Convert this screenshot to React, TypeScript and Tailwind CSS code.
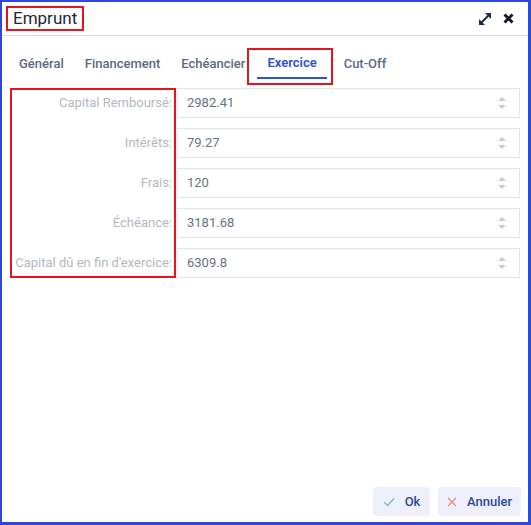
const tabs = ["Général", "Financement", "Echéancier", "Exercice", "Cut-Off"]

const rows = [
  { label: "Capital Remboursé:", value: "2982.41" },
  { label: "Intérêts:", value: "79.27" },
  { label: "Frais:", value: "120" },
  { label: "Échéance:", value: "3181.68" },
  { label: "Capital dû en fin d'exercice:", value: "6309.8" },
]

function Spinner() {
  return (
    <svg width="10" height="14" viewBox="0 0 10 14" className="mr-[12px]">
      <path d="M1 5 L5 1 L9 5 Z" fill="#c9ccd1" />
      <path d="M1 9 L9 9 L5 13 Z" fill="#c9ccd1" />
    </svg>
  )
}

export default function App() {
  return (
    <div
      className="w-[531px] h-[525px] bg-white border-t-2 border-l-2 border-r-[3px] border-b-[3px] border-[#2b49d6] flex flex-col"
      style={{ fontFamily: "Roboto, 'Noto Sans', sans-serif" }}
    >
      {/* header */}
      <div className="h-[34px] shrink-0 border-b border-[#d6d9de] flex items-center justify-between pl-[4px] pr-[14px]">
        <div className="border-2 border-[#e3151f] h-[25px] px-[5px] flex items-center">
          <span className="text-[17px] text-[#1c2838] leading-none">Emprunt</span>
        </div>
        <div className="flex items-center gap-[11px]">
          <svg width="14" height="14" viewBox="0 0 14 14">
            <path d="M3.5 10.5 L10.5 3.5" stroke="#1d2c4a" strokeWidth="2" />
            <path d="M7 1 L13 1 L13 7 Z" fill="#1d2c4a" />
            <path d="M1 7 L1 13 L7 13 Z" fill="#1d2c4a" />
          </svg>
          <svg width="11" height="11" viewBox="0 0 11 11">
            <path d="M1.5 1.5 L9.5 9.5 M9.5 1.5 L1.5 9.5" stroke="#141a26" strokeWidth="3" />
          </svg>
        </div>
      </div>

      {/* tabs */}
      <div className="flex items-end pl-[7px] pt-[12px] gap-[1px] h-[43px] shrink-0">
        {tabs.map((t) => {
          const active = t === "Exercice"
          return (
            <div key={t} className={"relative " + (active ? "ml-[1px] mr-[6px]" : "")}>
              <div
                className={
                  "px-[10px] h-[30px] pb-[2px] text-[13px] leading-none flex items-center " +
                  (active
                    ? "text-[#2d52cf] font-semibold border-b-2 border-[#2d52cf]"
                    : "text-[#5b6a7f] font-medium")
                }
              >
                {t}
              </div>
              {active && (
                <div className="absolute left-[-10px] right-[-6px] top-[-1px] bottom-[-6px] border-2 border-[#e3151f]" />
              )}
            </div>
          )
        })}
      </div>

      {/* form */}
      <div className="relative mt-[9px] pl-[8px] pr-[8px] flex flex-col gap-[10px]">
        {rows.map((r) => (
          <div key={r.label} className="flex items-center h-[30px]">
            <div className="w-[167px] pr-[5px] text-right text-[13px] text-[#b3b8bf] whitespace-nowrap">
              {r.label}
            </div>
            <div className="flex-1 h-[30px] border border-[#e3e5e8] flex items-center justify-between">
              <span className="pl-[9px] text-[13px] text-[#667283]">{r.value}</span>
              <Spinner />
            </div>
          </div>
        ))}
        <div className="absolute left-[8px] top-0 w-[166px] h-[190px] border-2 border-[#e3151f]" />
      </div>

      <div className="flex-1" />

      {/* footer */}
      <div className="flex justify-end gap-[8px] pr-[7px] pb-[6px]">
        <button className="h-[29px] w-[57px] rounded-[4px] bg-[#edf0fa] flex items-center justify-center gap-[10px] text-[13px] font-medium text-[#2e4896]">
          <svg width="12" height="10" viewBox="0 0 12 10">
            <path d="M1 5 L4.5 8.5 L11 1.5" stroke="#6cc3b3" strokeWidth="1.3" fill="none" />
          </svg>
          Ok
        </button>
        <button className="h-[29px] w-[83px] rounded-[4px] bg-[#edf0fa] flex items-center justify-center gap-[10px] text-[13px] font-medium text-[#2e4896]">
          <svg width="10" height="10" viewBox="0 0 10 10">
            <path d="M1 1 L9 9 M9 1 L1 9" stroke="#ee8a8a" strokeWidth="1.3" />
          </svg>
          Annuler
        </button>
      </div>
    </div>
  )
}
